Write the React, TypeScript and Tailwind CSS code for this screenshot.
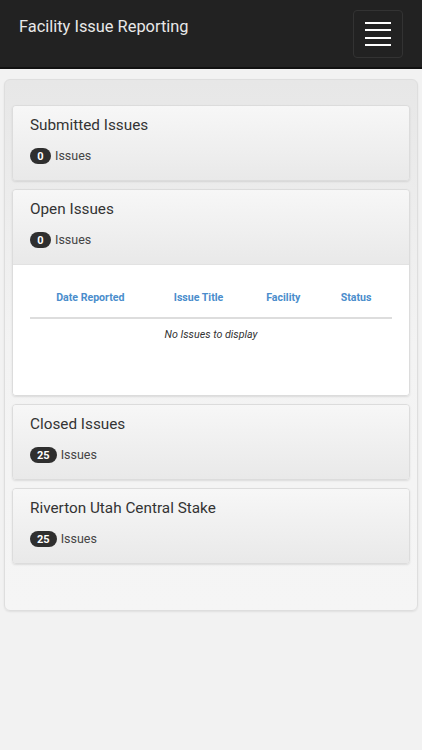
import React from 'react';

type Summary = {
  title: string;
  count: number;
};

const Badge: React.FC<{ count: number }> = ({ count }) => (
  <div className="flex items-center">
    <span className="inline-flex h-[16px] min-w-[21px] items-center justify-center rounded-full bg-[#2f2f2f] px-[7px] text-[11px] font-bold leading-none text-white">
      {count}
    </span>
    <span className="ml-[4px] text-[12.5px] leading-none text-[#444]">Issues</span>
  </div>
);

const CardHeader: React.FC<Summary> = ({ title, count }) => (
  <div className="h-[74px] bg-gradient-to-b from-[#f7f7f7] to-[#e9e9e9] px-[17px] pt-[9px]">
    <h2 className="text-[15.3px] leading-[20px] text-[#333]">{title}</h2>
    <div className="mt-[13px]">
      <Badge count={count} />
    </div>
  </div>
);

const columns = [
  { label: 'Date Reported', width: 'w-[121px]' },
  { label: 'Issue Title', width: 'w-[96px]' },
  { label: 'Facility', width: 'w-[74px]' },
  { label: 'Status', width: 'w-[72px]' },
];

const App: React.FC = () => {
  return (
    <div className="min-h-[750px] bg-[#f2f2f2] font-['Roboto',sans-serif]">
      <header className="flex h-[69px] items-start justify-between border-b-2 border-[#111] bg-[#222]">
        <h1 className="ml-[19px] mt-[16px] text-[16.4px] leading-[22px] text-[#e8e8e8]">Facility Issue Reporting</h1>
        <button className="mr-[19px] mt-[10px] flex h-[48px] w-[50px] flex-col items-center justify-center gap-[5.5px] rounded-[4px] border border-[#333]">
          <span className="block h-[2px] w-[26px] bg-white" />
          <span className="block h-[2px] w-[26px] bg-white" />
          <span className="block h-[2px] w-[26px] bg-white" />
          <span className="block h-[2px] w-[26px] bg-white" />
        </button>
      </header>

      <main className="mx-[4px] mt-[10px] rounded-[6px] border border-[#dedede] bg-gradient-to-b from-[#e7e7e7] via-[#f3f3f3] to-[#f5f5f5] px-[7px] pb-[46px] pt-[25px] shadow-[0_1px_2px_rgba(0,0,0,0.08)]">
        <div className="flex flex-col gap-[8px]">
          <section className="overflow-hidden rounded-[4px] border border-[#dcdcdc] shadow-[0_1px_2px_rgba(0,0,0,0.1)]">
            <CardHeader title="Submitted Issues" count={0} />
          </section>

          <section className="overflow-hidden rounded-[4px] border border-[#dcdcdc] shadow-[0_1px_2px_rgba(0,0,0,0.1)]">
            <CardHeader title="Open Issues" count={0} />
            <div className="h-[131px] border-t border-[#e2e2e2] bg-white px-[17px] pt-[26px]">
              <div className="flex border-b-2 border-[#dddddd] pb-[12px]">
                {columns.map((c) => (
                  <div key={c.label} className={`${c.width} text-center text-[10.6px] font-bold leading-[14px] text-[#4a8dcc]`}>
                    {c.label}
                  </div>
                ))}
              </div>
              <p className="mt-[9px] text-center text-[10.7px] italic leading-[14px] text-[#333]">No Issues to display</p>
            </div>
          </section>

          <section className="overflow-hidden rounded-[4px] border border-[#dcdcdc] shadow-[0_1px_2px_rgba(0,0,0,0.1)]">
            <CardHeader title="Closed Issues" count={25} />
          </section>

          <section className="overflow-hidden rounded-[4px] border border-[#dcdcdc] shadow-[0_1px_2px_rgba(0,0,0,0.1)]">
            <CardHeader title="Riverton Utah Central Stake" count={25} />
          </section>
        </div>
      </main>
    </div>
  );
};

export default App;
